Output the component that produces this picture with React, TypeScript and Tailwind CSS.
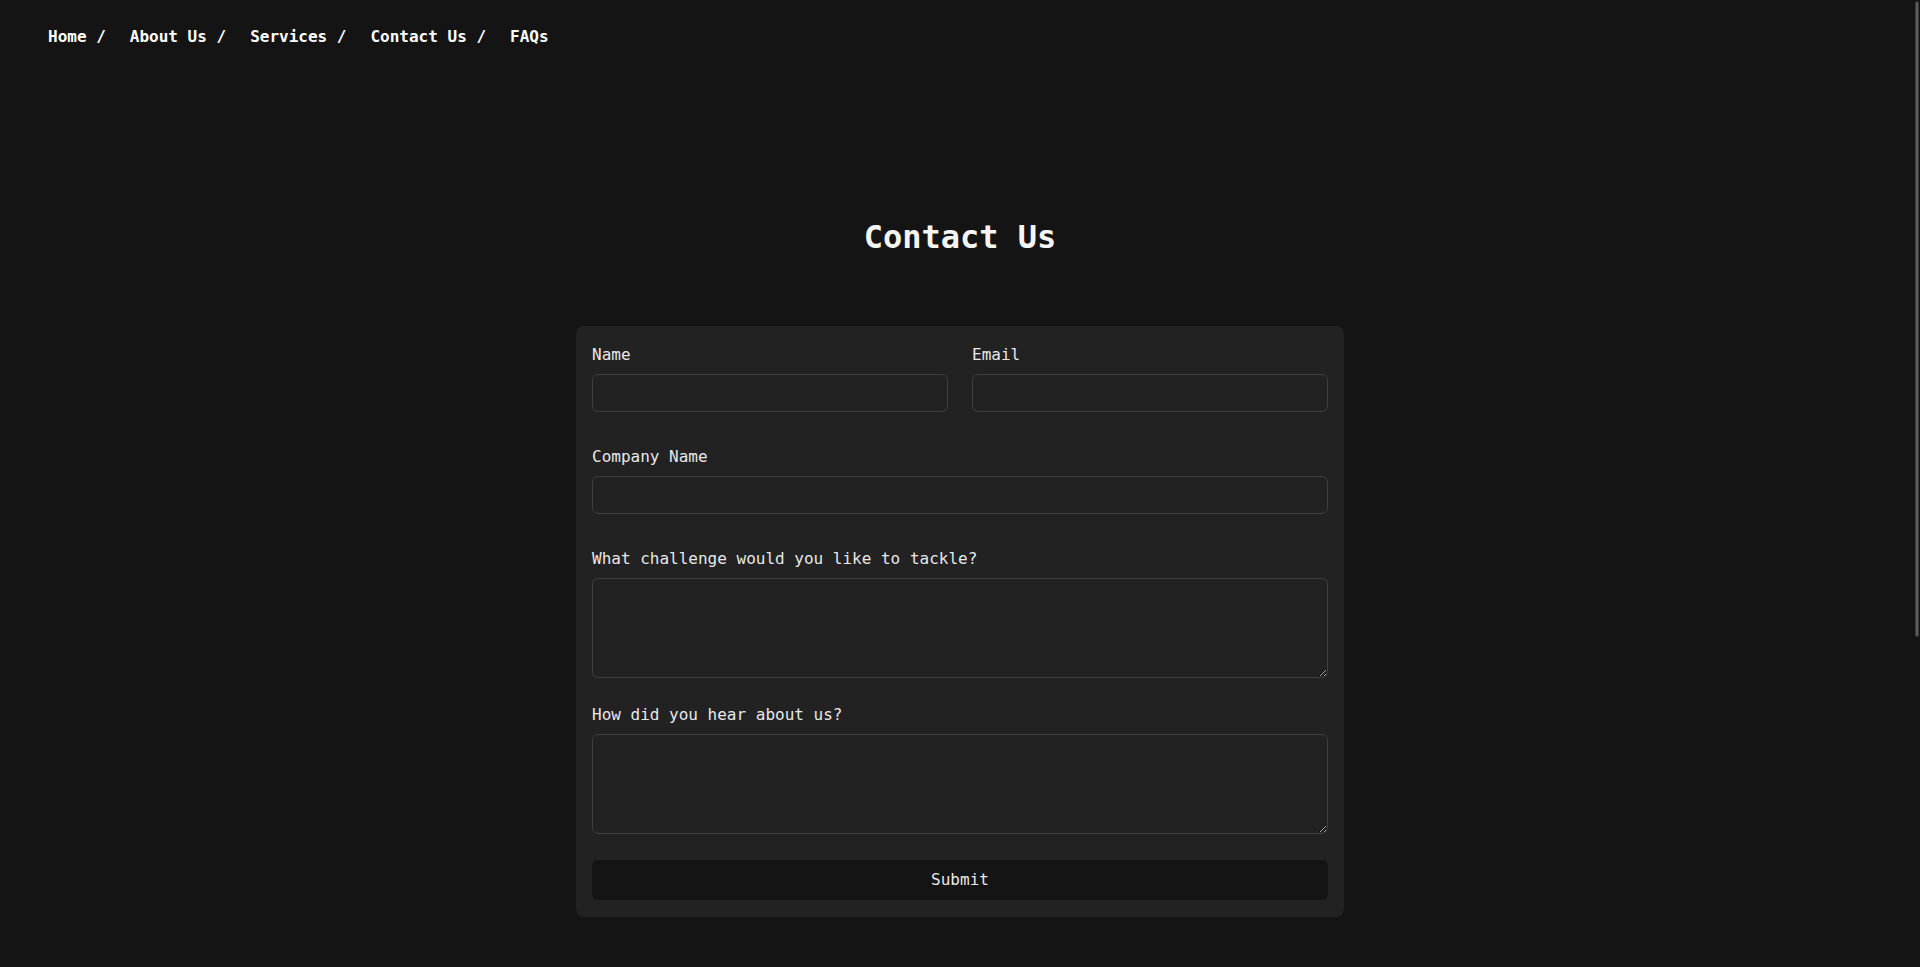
import React from 'react';

const NAV_LINKS = ['Home', 'About Us', 'Services', 'Contact Us', 'FAQs'];

const MONO = "font-['DejaVu_Sans_Mono','Liberation_Mono',monospace]";

const Field: React.FC<{ label: string; className?: string; children: React.ReactNode }> = ({ label, className, children }) => (
  <div className={`flex flex-col ${className ?? ''}`}>
    <label className="text-base leading-6 text-[#e8e8e8] pt-px mb-[7px]">{label}</label>
    {children}
  </div>
);

const inputCls =
  'block w-full h-[38px] rounded-md border border-[#3f3f3f] bg-[#222222] px-2 text-sm text-white outline-none';
const areaCls =
  'block w-full h-[100px] rounded-md border border-[#3f3f3f] bg-[#222222] p-2 text-sm text-white outline-none resize-y';

export default function App() {
  return (
    <div className={`min-h-screen bg-[#141414] text-white ${MONO}`}>
      {/* Nav */}
      <nav className="px-12 pt-[25px] pb-[23px]">
        <ul className="flex items-center gap-6">
          {NAV_LINKS.map((link, i) => (
            <li key={link} className="text-base leading-6 font-bold text-white">
              {link}
              {i < NAV_LINKS.length - 1 && ' /'}
            </li>
          ))}
        </ul>
      </nav>

      <main className="flex flex-col items-center">
        <h1 className="mt-[145px] mb-[69px] text-[32px] leading-10 font-bold text-[#f5f5f5]">Contact Us</h1>

        <form className="w-full max-w-3xl rounded-lg bg-[#222222] px-4 pt-4 pb-[17px]" onSubmit={e => e.preventDefault()}>
          <div className="grid grid-cols-2 gap-6 mb-8">
            <Field label="Name">
              <input type="text" className={inputCls} />
            </Field>
            <Field label="Email">
              <input type="email" className={inputCls} />
            </Field>
          </div>

          <Field label="Company Name" className="mb-8">
            <input type="text" className={inputCls} />
          </Field>

          <Field label="What challenge would you like to tackle?" className="mb-6">
            <textarea className={areaCls} />
          </Field>

          <Field label="How did you hear about us?" className="mb-[26px]">
            <textarea className={areaCls} />
          </Field>

          <button
            type="submit"
            className="block w-full h-10 rounded-md bg-[#141414] text-base text-[#e8e8e8]"
          >
            Submit
          </button>
        </form>
      </main>

      {/* overlay scrollbar thumb */}
      <div className="fixed top-[1px] right-[1px] w-[4px] h-[636px] rounded-sm bg-[#5c5c5c] border border-[#3a3a3a]" />
    </div>
  );
}
